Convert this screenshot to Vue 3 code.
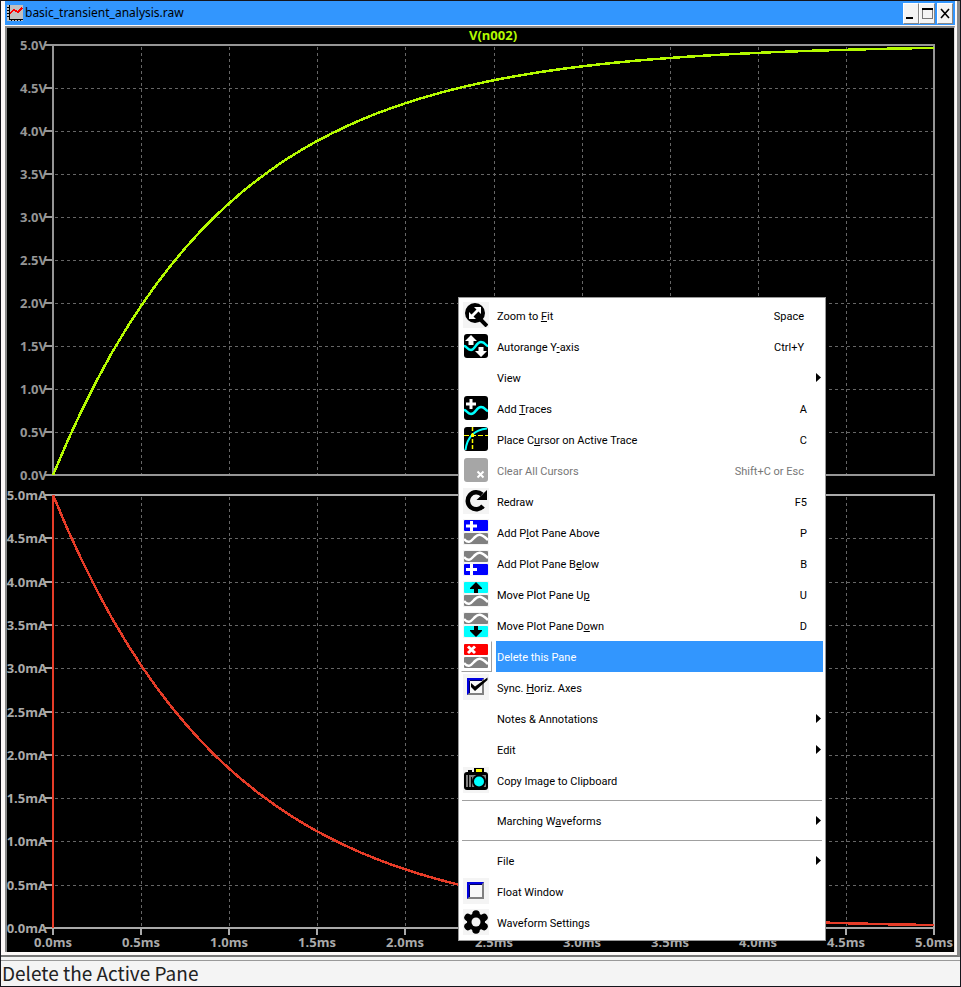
<script setup>
const plotLeft = 46
const plotWidth = 881
const topAxis = { y: 17, h: 430, unit: 'V' }
const bottomAxis = { y: 467, h: 433, unit: 'mA' }
const steps = Array.from({ length: 11 }, (_, i) => i)
const xAt = (i) => Math.round(plotLeft + (plotWidth * i) / 10)
const yAt = (axis, i) => Math.round(axis.y + (axis.h * i) / 10)
const label = (i) => (i / 2).toFixed(1)

function trace(axis, fn) {
  const pts = []
  for (let k = 0; k <= 60; k++) {
    const t = (k / 60) * 5
    pts.push(`${(plotLeft + (t / 5) * plotWidth).toFixed(1)},${(axis.y + axis.h * (1 - fn(t))).toFixed(1)}`)
  }
  return pts.join(' ')
}
const voltage = trace(topAxis, (t) => 1 - Math.exp(-t))
const current = `${plotLeft},${bottomAxis.y + bottomAxis.h} ` + trace(bottomAxis, (t) => Math.exp(-t))

// text: [before, mnemonic, after]
const items = [
  { icon: 'zoom', plate: true, text: ['Zoom to ', 'F', 'it'], key: 'Space' },
  { icon: 'range', text: ['Autorange Y', '-', 'axis'], key: 'Ctrl+Y' },
  { text: ['View'], sub: true },
  { icon: 'add', text: ['Add ', 'T', 'races'], key: 'A' },
  { icon: 'cursor', text: ['Place C', 'u', 'rsor on Active Trace'], key: 'C' },
  { icon: 'clear', text: ['Clear All Cursors'], key: 'Shift+C or Esc', disabled: true },
  { icon: 'redraw', plate: true, text: ['Redraw'], key: 'F5' },
  { icon: 'above', plate: true, text: ['Add P', 'l', 'ot Pane Above'], key: 'P' },
  { icon: 'below', plate: true, text: ['Add Plot Pane B', 'e', 'low'], key: 'B' },
  { icon: 'up', plate: true, text: ['Move Plot Pane U', 'p', ''], key: 'U' },
  { icon: 'down', plate: true, text: ['Move Plot Pane D', 'o', 'wn'], key: 'D' },
  { icon: 'delete', text: ['Delete this Pane'], active: true },
  { icon: 'sync', plate: true, text: ['Sync. ', 'H', 'oriz. Axes'] },
  { text: ['Notes & Annotations'], sub: true },
  { text: ['Edit'], sub: true },
  { icon: 'camera', plate: true, text: ['Copy Image to Clipboard'] },
  { sep: true },
  { text: ['Marching W', 'a', 'veforms'], sub: true },
  { sep: true },
  { text: ['File'], sub: true },
  { icon: 'float', plate: true, text: ['Float Window'] },
  { icon: 'gear', plate: true, text: ['Waveform Settings'] },
]
const isBlack = (n) => ['range', 'add', 'cursor'].includes(n)
const bandTop = { above: '#0000ff', up: '#00ffff', delete: '#ff0000' }
const bandBottom = { below: '#0000ff', down: '#00ffff' }
</script>

<template>
  <div class="app">
    <main class="window">
      <header class="titlebar">
        <svg class="logo" viewBox="0 0 16 16" shape-rendering="crispEdges">
          <rect width="16" height="16" fill="#c0c0c0" />
          <path d="M2 0V14H16M0 2H2M0 5H2M0 8H2M0 11H2M4 14V16M7 14V16M10 14V16M13 14V16" fill="none" stroke="#000" />
          <path d="M3 8L7 5L11 7L15 3" fill="none" stroke="#f00" stroke-width="1.5" />
        </svg>
        <h1>basic_transient_analysis.raw</h1>
        <div class="buttons">
          <button aria-label="Minimize"><svg viewBox="0 0 14 18"><path d="M2 14H9" stroke="#000" stroke-width="2" /></svg></button>
          <button aria-label="Maximize"><svg viewBox="0 0 14 18" shape-rendering="crispEdges"><path d="M2 5.5V14.5H12V5.5" fill="none" stroke="#777" /><path d="M1.5 5H12.5" stroke="#000" stroke-width="2" /></svg></button>
          <button class="close" aria-label="Close"><svg viewBox="0 0 14 18"><path d="M3 5L11 14M11 5L3 14" stroke="#000" stroke-width="1.6" /></svg></button>
        </div>
      </header>

      <section class="plot">
        <svg viewBox="0 0 947 924" class="chart">
          <text class="name" x="486" y="12">V(n002)</text>
          <g v-for="axis in [topAxis, bottomAxis]" :key="axis.unit" :class="axis.unit">
            <g class="grid">
              <line v-for="i in steps.slice(1, 10)" :key="'x' + i" :x1="xAt(i) + 0.5" :x2="xAt(i) + 0.5" :y1="axis.y + 2" :y2="axis.y + axis.h" />
              <line v-for="i in steps.slice(1, 10)" :key="'y' + i" :x1="plotLeft + 2" :x2="plotLeft + plotWidth" :y1="yAt(axis, i) + 0.5" :y2="yAt(axis, i) + 0.5" />
            </g>
            <rect class="frame" :x="plotLeft" :y="axis.y" :width="plotWidth" :height="axis.h" />
            <g v-for="i in steps" :key="i">
              <line class="tick" :x1="plotLeft - 8" :x2="plotLeft" :y1="yAt(axis, i)" :y2="yAt(axis, i)" />
              <text class="value" :x="plotLeft - 6" :y="yAt(axis, i) + 5">{{ label(10 - i) }}{{ axis.unit }}</text>
            </g>
          </g>
          <g v-for="i in steps" :key="i" class="mA">
            <line class="tick" :x1="xAt(i)" :x2="xAt(i)" y1="900" y2="907" />
            <text class="time" :x="xAt(i)" y="919">{{ label(i) }}ms</text>
          </g>
          <polyline class="trace green" :points="voltage" />
          <polyline class="trace red" :points="current" />
        </svg>

        <nav class="menu" role="menu">
          <template v-for="(m, n) in items" :key="n">
            <hr v-if="m.sep" />
            <button v-else class="item" role="menuitem" :class="{ active: m.active }" :disabled="m.disabled">
              <span class="cell">
                <span v-if="m.icon" class="plate" :class="{ tinted: m.plate }">
                  <svg viewBox="0 0 24 24">
                    <rect v-if="isBlack(m.icon)" width="24" height="24" rx="3" fill="#000" />
                    <template v-if="m.icon === 'zoom'">
                      <circle cx="11" cy="10" r="10" />
                      <path d="M16 16L23 23" stroke="#000" stroke-width="4" />
                      <path d="M10 4H17V11L14.5 8.5L9.5 13.5L12 16H5V9L7.5 11.5L12.5 6.5Z" fill="#fff" />
                    </template>
                    <template v-else-if="m.icon === 'range'">
                      <path d="M0 12C3 12 3 16 7 16S12 8 17 8S21 12 24 12" fill="none" stroke="#0ff" stroke-width="2.5" />
                      <path d="M7 1L13 7H9.5V11H4.5V7H1ZM17 23L11 17H14.5V13H19.5V17H23Z" fill="#fff" />
                    </template>
                    <template v-else-if="m.icon === 'add'">
                      <path d="M0 14C3 14 3 18 7 18C12 18 12 11 17 11C21 11 21 14 24 15" fill="none" stroke="#0ff" stroke-width="2.5" />
                      <path d="M7 3V13M2 8H12" stroke="#fff" stroke-width="3" />
                    </template>
                    <template v-else-if="m.icon === 'cursor'">
                      <path d="M1.5 23C3 11 9 3 23 1.5" fill="none" stroke="#0ff" stroke-width="2" />
                      <path d="M0 8.5H24" stroke="#ff0" stroke-dasharray="5 2" />
                      <path d="M8.5 0V24" stroke="#ff0" stroke-dasharray="4 2" stroke-width="1.5" />
                      <rect x="7" y="7" width="3" height="3" fill="#ff0" />
                    </template>
                    <template v-else-if="m.icon === 'clear'">
                      <rect width="24" height="24" rx="3" fill="#a6a6a6" />
                      <path d="M13.5 13.5L19.5 19.5M19.5 13.5L13.5 19.5" stroke="#fff" stroke-width="2" />
                    </template>
                    <template v-else-if="m.icon === 'redraw'">
                      <path d="M18 5.5A8.5 8.5 0 1 0 19 17" fill="none" stroke="#000" stroke-width="4.5" />
                      <path d="M23 1V11H12.5Z" />
                    </template>
                    <template v-else-if="bandTop[m.icon]">
                      <rect width="24" height="11" rx="1" :fill="bandTop[m.icon]" />
                      <rect y="13" width="24" height="11" rx="1" fill="#808080" />
                      <path d="M0 19C5 25 8 20 11 17S17 13 24 20" fill="none" stroke="#fff" stroke-width="2.5" />
                      <path v-if="m.icon === 'above'" d="M7.5 1V11M2 6H13" stroke="#fff" stroke-width="3" />
                      <path v-else-if="m.icon === 'up'" d="M12 0L18 6V7H14V11H10V7H6V6Z" />
                      <path v-else d="M4 2.5L11 9M11 2.5L4 9" stroke="#fff" stroke-width="3" />
                    </template>
                    <template v-else-if="bandBottom[m.icon]">
                      <rect width="24" height="11" rx="1" fill="#808080" />
                      <rect y="13" width="24" height="11" rx="1" :fill="bandBottom[m.icon]" />
                      <path d="M0 6C5 12 8 7 11 4S17 0 24 7" fill="none" stroke="#fff" stroke-width="2.5" />
                      <path v-if="m.icon === 'below'" d="M7.5 13V24M2 18.5H13" stroke="#fff" stroke-width="3" />
                      <path v-else d="M12 24L18 18V17H14V13H10V17H6V18Z" />
                    </template>
                    <template v-else-if="m.icon === 'sync' || m.icon === 'float'">
                      <rect x="3" y="3" width="17" height="17" fill="#808080" />
                      <path d="M3 20V3H20L18 5H5V18Z" fill="#0000e0" />
                      <rect x="5" y="5" width="13" height="13" fill="#f8f8f8" />
                      <path d="M5.5 18V5.5H18" fill="none" stroke="#000060" />
                      <path v-if="m.icon === 'sync'" d="M7 8L11 11.5L23.5 2.5V5L11 16L7 12Z" />
                    </template>
                    <template v-else-if="m.icon === 'camera'">
                      <rect y="4" width="24" height="18" rx="3" />
                      <path d="M4 2H8V5H4ZM10 0H20V5H10Z" />
                      <rect x="12" y="1" width="6" height="3" fill="#ff0" />
                      <path d="M2 7H22V19H2Z" fill="#808080" />
                      <path d="M4.5 7V19M7.5 9V19" stroke="#000" />
                      <circle cx="15" cy="13.5" r="7" />
                      <circle cx="15" cy="13.5" r="5" fill="#0ff" />
                    </template>
                    <template v-else>
                      <circle cx="12" cy="12" r="9" />
                      <path d="M12 4V20M4 7.5L20 16.5M20 7.5L4 16.5" stroke="#000" stroke-width="7.5" stroke-linecap="round" />
                      <circle cx="12" cy="12" r="4.5" fill="#f4f4f4" />
                    </template>
                  </svg>
                </span>
              </span>
              <span class="caption">
                <span class="text">{{ m.text[0] }}<u v-if="m.text[1]">{{ m.text[1] }}</u>{{ m.text[2] }}</span>
                <span v-if="m.key" class="text key" :class="{ short: m.key.length < 3 }">{{ m.key }}</span>
                <svg v-if="m.sub" class="arrow" viewBox="0 0 5 9"><path d="M0 0L5 4.5L0 9Z" /></svg>
              </span>
            </button>
          </template>
        </nav>
      </section>
    </main>
    <footer class="status">Delete the Active Pane</footer>
  </div>
</template>

<style>
body { margin: 0; background: #f4f4f4; }
</style>

<style scoped>
* { box-sizing: border-box; }
.app {
  font-family: "Noto Sans", sans-serif;
  border: 1px solid #15151c;
  background: #f4f4f4;
}
.window {
  padding: 0 2px 3px 4px;
  background: #fdf9f8;
  border-right: 3px solid #888;
  border-bottom: 2px solid #777;
}
.titlebar {
  display: flex;
  align-items: center;
  height: 24px;
  background: #3296fe;
}
.logo { width: 16px; height: 16px; margin-left: 2px; }
h1 { flex: 1; margin: 0 0 0 2px; font-size: 12px; font-weight: 400; line-height: 20px; color: #000; }
.buttons { display: flex; padding-right: 2px; }
.buttons button {
  width: 16px;
  height: 21px;
  padding: 0;
  border: 1px solid;
  border-color: #fff #888 #888 #fff;
  background: #f4f4f4;
}
.buttons .close { margin-left: 2px; }
.buttons svg { display: block; width: 14px; height: 18px; }
.plot {
  position: relative;
  margin-top: 1px;
  border: 2px solid;
  border-width: 2px 1px 0 2px;
  border-color: #888 #ddd #888 #888;
  background: #000;
}
.chart { display: block; width: 100%; overflow: visible; }
.chart text { font-family: "Open Sans", sans-serif; font-weight: 700; font-size: 13px; }
.name { fill: #b4fa00; text-anchor: middle; }
.value { text-anchor: end; }
.time { text-anchor: middle; }
.V text { fill: #969696; }
.V .frame, .V .tick { stroke: #969696; }
.mA text { fill: #aaa; }
.mA .frame, .mA .tick { stroke: #aaa; }
.frame { fill: none; stroke-width: 2; shape-rendering: crispEdges; }
.tick { stroke-width: 2; shape-rendering: crispEdges; }
.grid line { stroke: #666; stroke-dasharray: 3 3; shape-rendering: crispEdges; }
.trace { fill: none; stroke-width: 2.5; shape-rendering: crispEdges; }
.green { stroke: #b4fa00; }
.red { stroke: #e63c28; }
.menu {
  position: absolute;
  left: 451px;
  top: 269px;
  width: 368px;
  padding: 2px;
  border: 1px solid #999;
  background: #fff;
}
.item {
  display: flex;
  width: 100%;
  height: 31px;
  padding: 0;
  border: 0;
  background: none;
  font: 11px/28px Roboto, sans-serif;
  color: #000;
  text-align: left;
}
.item:disabled { color: #777; }
.cell {
  display: flex;
  align-items: flex-start;
  width: 31px;
  height: 31px;
  margin-right: 4px;
  padding: 1px;
  border: 1px solid transparent;
}
.active .cell { border-color: #fff #a0a0a0 #a0a0a0 #fff; }
.plate { padding: 1px; }
.plate.tinted { background: #f4f4f4; }
.plate svg { display: block; width: 24px; height: 24px; }
.caption {
  flex: 1;
  display: flex;
  align-items: center;
  justify-content: space-between;
  padding-left: 1px;
  white-space: pre;
}
.active .caption { background: #3296fe; color: #fff; }
.text { padding-top: 2px; }
.key { padding-right: 19px; }
.key.short { padding-right: 16px; }
.arrow { width: 5px; height: 9px; margin-right: 2px; }
hr { height: 1px; margin: 4px 1px; border: 0; background: #a0a0a0; }
.status {
  margin-top: 3px;
  padding: 0 1px 1px;
  border-top: 1px solid #999;
  font: 19px/24px "Noto Sans CJK SC", sans-serif;
  color: #222;
}
</style>
